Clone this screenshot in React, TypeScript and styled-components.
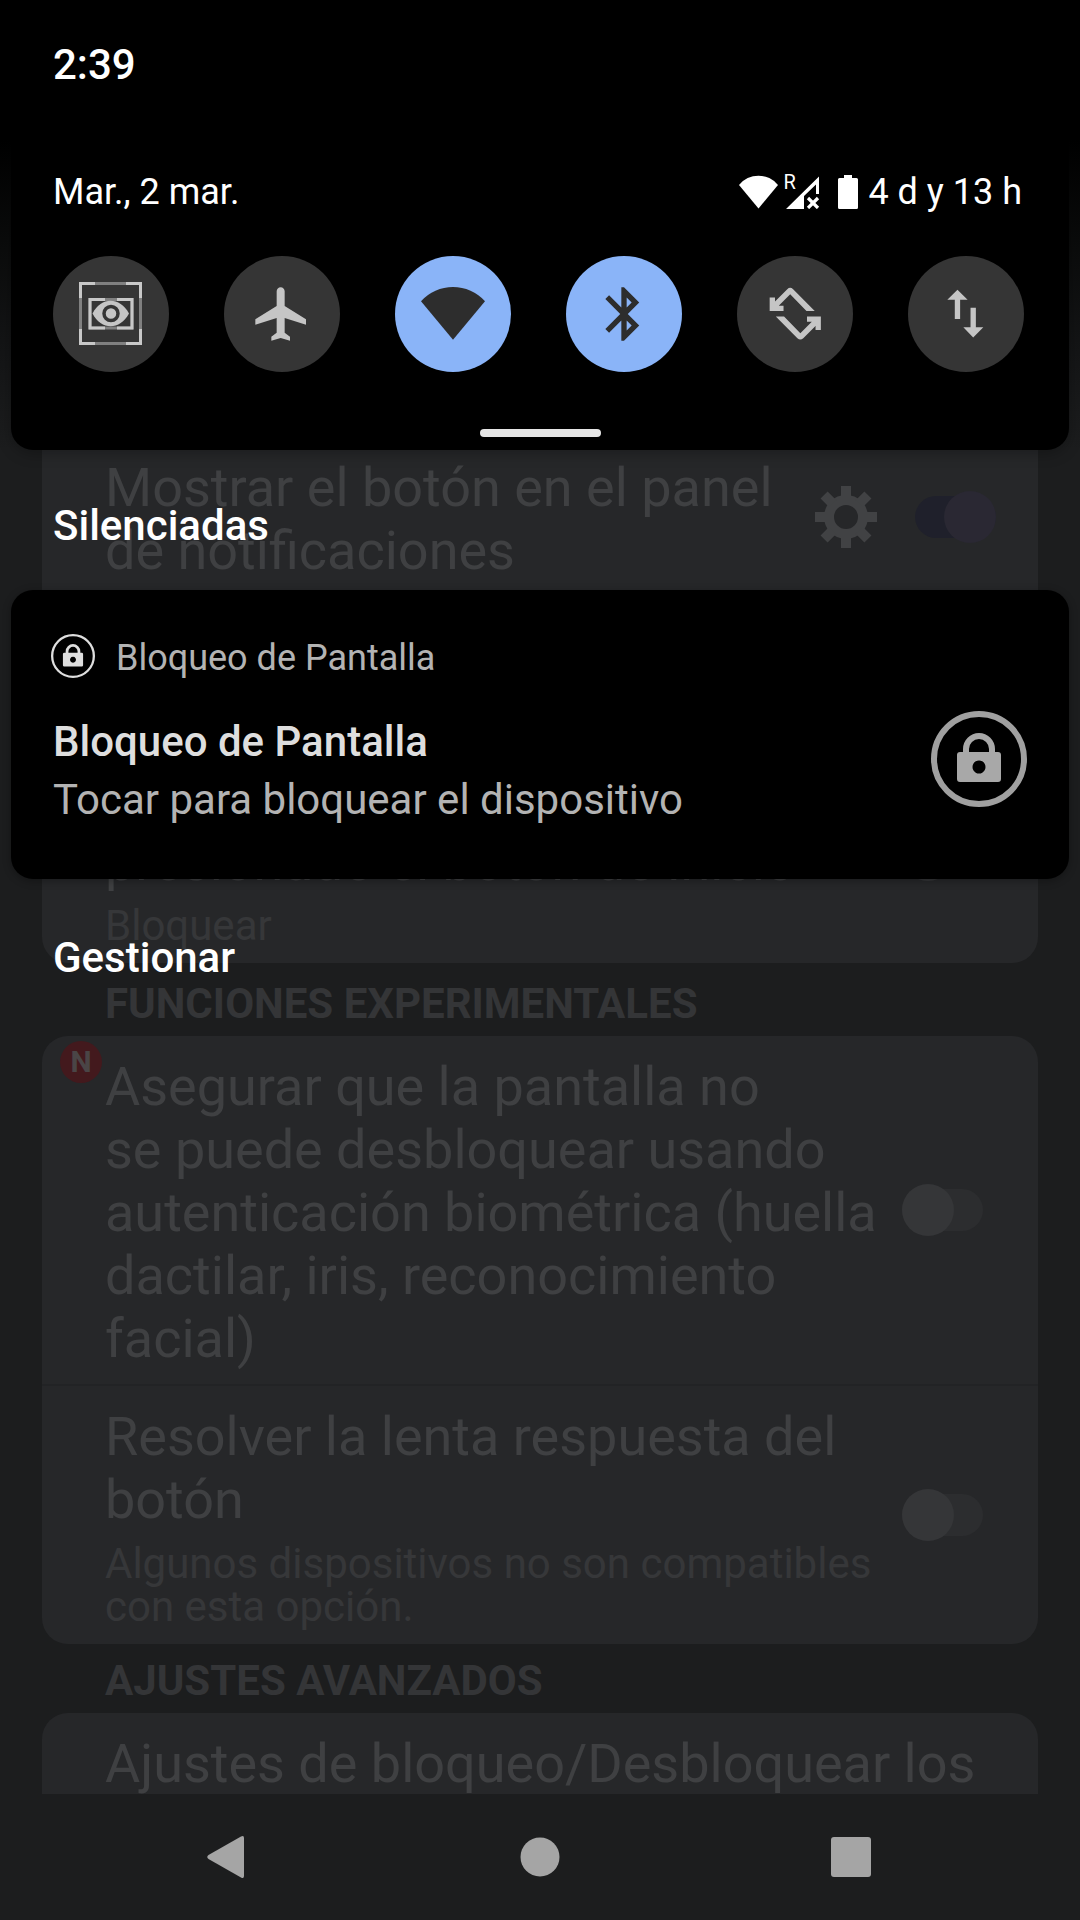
import React, { useId } from "react";
import styled, { createGlobalStyle } from "styled-components";

const GlobalStyle = createGlobalStyle`
  *, *::before, *::after { box-sizing: border-box; }
  body {
    margin: 0;
    background: #1c1d1e;
    font-family: Roboto, "Liberation Sans", sans-serif;
  }
  h1, h2, h3, p { margin: 0; font-weight: 400; }
  button {
    padding: 0;
    border: 0;
    background: none;
    color: inherit;
    font: inherit;
    cursor: pointer;
  }
  svg { display: block; }
`;

const Phone = styled.div`
  position: relative;
  display: flex;
  flex-direction: column;
  height: 100vh;
  overflow: hidden;
  background: #1c1d1e;
`;

/* ---------- settings screen, dimmed behind the shade ---------- */

const Settings = styled.main`
  flex: 1;
  min-height: 0;
  overflow: hidden;
  padding: 437px 42px 0;
`;

const cardRadius = { full: "26px", end: "0 0 26px 26px", start: "26px 26px 0 0" };

const Card = styled.section<{ $part?: keyof typeof cardRadius }>`
  position: relative;
  background: #262729;
  border-radius: ${(p) => cardRadius[p.$part ?? "full"]};
  margin-bottom: ${(p) => (p.$part === "end" ? "4px" : "0")};
`;

const Row = styled.div<{ $edge?: number; $minHeight?: number }>`
  display: flex;
  align-items: center;
  min-height: ${(p) => p.$minHeight ?? 0}px;
  padding: 0 ${(p) => p.$edge ?? 55}px 0 63px;

  & + & {
    border-top: 2px solid #222325;
  }
`;

const RowText = styled.div`
  flex: 1;
  align-self: flex-end;
  padding: 19px 0 14px;
`;

const RowTitle = styled.label`
  display: block;
  font-size: 54px;
  line-height: 63px;
  color: #3f4042;
`;

const RowNote = styled.p`
  margin: 11px 0 2px;
  font-size: 42px;
  line-height: 43px;
  color: #363739;
`;

const GroupTitle = styled.h2`
  padding: 12px 63px 8px;
  font-size: 42px;
  line-height: 49px;
  font-weight: 700;
  color: #343537;
`;

const NewBadge = styled.span`
  position: absolute;
  left: 18px;
  top: 5px;
  width: 42px;
  height: 42px;
  border-radius: 50%;
  background: #43191d;
  color: #4a4546;
  font-size: 30px;
  line-height: 42px;
  font-weight: 700;
  text-align: center;
`;

const GearButton = styled.button`
  margin-right: 38px;
  color: #414244;
`;

const Switch = styled.input`
  appearance: none;
  position: relative;
  flex: none;
  width: 81px;
  height: 42px;
  margin: 0;
  border-radius: 21px;
  background: #2c2d2f;

  &::before {
    content: "";
    position: absolute;
    top: -5px;
    left: 0;
    width: 52px;
    height: 52px;
    border-radius: 50%;
    background: #353638;
  }
  &:checked {
    background: #1f202b;
  }
  &:checked::before {
    left: 29px;
    background: #2a2833;
  }
`;

const NavBar = styled.nav`
  display: grid;
  grid-template-columns: repeat(3, 312px);
  justify-content: center;
  height: 126px;
  color: #a5a5a5;
`;

const NavButton = styled.button`
  display: grid;
  place-items: center;
`;

/* ---------- notification shade ---------- */

const Shade = styled.div`
  position: absolute;
  inset: 0 0 126px;
  padding: 0 11px;
  background: linear-gradient(#000 0, #000 130px, #0b0c0c 250px, #131415 340px, rgba(28, 29, 30, 0) 450px);
`;

const Heading = styled.h2`
  font-size: 42px;
  line-height: 49px;
  font-weight: 500;
  color: #fff;
`;

const StatusBar = styled.header`
  height: 128px;
  padding: 40px 42px 0;
`;

const QuickPanel = styled.section`
  padding: 42px 42px 13px;
  border-radius: 0 0 22px 22px;
  background: #000;
  box-shadow: 0 4px 14px rgba(0, 0, 0, 0.25);
`;

const InfoRow = styled.div`
  display: flex;
  justify-content: space-between;
  align-items: center;
  padding-right: 5px;
  font-size: 36px;
  line-height: 44px;
  color: #fff;
`;

const StatusIcons = styled.div`
  display: flex;
  align-items: center;
`;

const Signal = styled.span`
  position: relative;
  margin: 0 18px 0 8px;
`;

const Roaming = styled.span`
  position: absolute;
  left: -3px;
  top: -5px;
  font-size: 20px;
  line-height: 24px;
`;

const BatteryText = styled.span`
  margin-left: 10px;
`;

const Tiles = styled.div`
  display: flex;
  justify-content: space-between;
  margin: 42px 0 57px;
  padding-right: 3px;
`;

const Tile = styled.button<{ $on?: boolean }>`
  display: grid;
  place-items: center;
  width: 116px;
  height: 116px;
  border-radius: 50%;
  background: ${(p) => (p.$on ? "#8ab4f8" : "#353535")};
  color: ${(p) => (p.$on ? "#2d2d2d" : "#c5c5c5")};
`;

const Handle = styled.div`
  width: 121px;
  height: 8px;
  margin: 0 auto;
  border-radius: 4px;
  background: #e6e6e6;
`;

const ShadeLine = styled.div`
  padding: 51px 42px 40px;
`;

const ShadeFooter = styled.footer`
  padding: 54px 42px 40px;
`;

const Notification = styled.article`
  padding: 44px 42px 55px 40px;
  border-radius: 22px;
  background: #000;
  box-shadow: 0 2px 8px rgba(0, 0, 0, 0.3);
`;

const AppName = styled.div`
  display: flex;
  align-items: flex-end;
  gap: 21px;
  margin-bottom: 33px;
  font-size: 36px;
  line-height: 40px;
  color: #b3b3b3;
`;

const NoteBody = styled.div`
  display: flex;
  align-items: flex-start;
  justify-content: space-between;
`;

const NoteContent = styled.div`
  padding: 6px 0 0 2px;
`;

const NoteTitle = styled(Heading)`
  color: #dedede;
`;

const NoteText = styled.p`
  margin-top: 9px;
  font-size: 42px;
  line-height: 49px;
  color: #b3b3b3;
`;

/* ---------- drawings ---------- */

const Icon24 = ({ children }: { children: React.ReactNode }) => (
  <svg width="64" height="64" viewBox="0 0 24 24" fill="currentColor" aria-hidden="true">
    {children}
  </svg>
);

const EyeIcon = () => (
  <svg width="64" height="64" viewBox="0 0 64 64" fill="none" aria-hidden="true">
    <rect x="1.5" y="1.5" width="60" height="60" stroke="#808080" strokeWidth="3" />
    <path
      d="M1.5 16V1.5H16M47 1.5h14.5V16M61.5 47v14.5H47M16 61.5H1.5V47"
      stroke="#c8c8c8"
      strokeWidth="3"
    />
    <rect x="11" y="17.500" width="42" height="28.500" stroke="#808080" strokeWidth="3" />
    <path d="M26 17.500H11V46H26M38 17.500H53V46H38" stroke="#c8c8c8" strokeWidth="3" />
    <path d="M13.500 31.500C22 14.500 41 14.500 50 31.500C41 48.500 22 48.500 13.500 31.500z" fill="#c5c5c5" />
    <circle cx="32" cy="31.500" r="7" fill="#c5c5c5" stroke="#353535" strokeWidth="3.500" />
  </svg>
);

const AirplaneIcon = () => (
  <Icon24>
    <path d="M21 16v-2l-8-5V3.500c0-.83-.67-1.500-1.500-1.500S10 2.670 10 3.500V9l-8 5v2l8-2.500V19l-2 1.500V22l3.500-1 3.500 1v-1.500L13 19v-5.500l8 2.500z" />
  </Icon24>
);

const WifiTileIcon = () => (
  <Icon24>
    <path d="M0 7.200A16.200 16.200 0 0 1 24 7.200L12 21.700z" />
  </Icon24>
);

const BluetoothIcon = () => (
  <Icon24>
    <path d="M17.710 7.710L12 2h-1v7.590L6.410 5 5 6.410 10.590 12 5 17.590 6.410 19 11 14.410V22h1l5.710-5.710-4.300-4.290 4.300-4.290zM13 5.830l1.880 1.880L13 9.590V5.830zm1.880 10.460L13 18.170v-3.760l1.880 1.880z" />
  </Icon24>
);

const turnArrow =
  "M19.4 10.9L11.3 2.7Q10.2 1.700 9.100 2.700L4.500 7.300V5.800H2.500V10.900H7.700V8.900H5.900L10.200 4.600L16.300 10.900z";

const RotateIcon = () => (
  <Icon24>
    <path d={turnArrow} />
    <path d={turnArrow} transform="rotate(180 12.1 11.9)" />
  </Icon24>
);

const DataIcon = () => (
  <Icon24>
    <path d="M8.800 2.900L5 6.700h2.800v7.200h2V6.700h2.800zM14.700 20.800l3.800-3.800h-2.800V9.700h-2V17H11z" />
  </Icon24>
);

const WifiIcon = () => (
  <svg width="39" height="34" viewBox="0 0 39 34" fill="currentColor" aria-hidden="true">
    <path d="M0 10A25 25 0 0 1 39 10L19.500 33.500z" />
  </svg>
);

const SignalIcon = () => (
  <svg width="34" height="34" viewBox="0 0 34 34" fill="currentColor" aria-hidden="true">
    <path d="M0 34L33 1.500V19H30V9.500L18 21V34z" />
    <path d="M22 23l10 10M32 23L22 33" stroke="currentColor" strokeWidth="3.200" />
  </svg>
);

const BatteryIcon = () => (
  <svg width="20" height="34" viewBox="0 0 20 34" fill="currentColor" aria-hidden="true">
    <path d="M6 0h8v3h4.500Q20 3 20 4.500v28Q20 34 18.500 34h-17Q0 34 0 32.500v-28Q0 3 1.500 3H6z" />
  </svg>
);

const LockIcon = ({ size, ring, width, color }: { size: number; ring: string; width: number; color: string }) => (
  <svg width={size} height={size} viewBox="0 0 96 96" fill="none" aria-hidden="true">
    <circle cx="48" cy="48" r={48 - width / 2} stroke={ring} strokeWidth={width} />
    <path d="M35 42V38a13 13 0 0 1 26 0v4" stroke={color} strokeWidth="6" />
    <path
      fillRule="evenodd"
      fill={color}
      d="M29 41h38q3 0 3 3v24q0 3-3 3H29q-3 0-3-3V44q0-3 3-3zM48 49.500a6.500 6.500 0 1 0 .01 0z"
    />
  </svg>
);

const GearIcon = () => (
  <svg width="62" height="62" viewBox="-31 -31 62 62" fill="none" aria-hidden="true">
    <circle r="17" stroke="currentColor" strokeWidth="10" />
    {[0, 45, 90, 135, 180, 225, 270, 315].map((angle) => (
      <rect key={angle} x="-5" y="-31" width="10" height="12" fill="currentColor" transform={`rotate(${angle})`} />
    ))}
  </svg>
);

/* ---------- parts ---------- */

type SettingProps = {
  title: React.ReactNode;
  note?: string;
  on?: boolean;
  gear?: boolean;
  plain?: boolean;
  edge?: number;
  minHeight?: number;
};

function Setting({ title, note, on, gear, plain, edge, minHeight }: SettingProps) {
  const id = useId();
  return (
    <Row $edge={edge} $minHeight={minHeight}>
      <RowText>
        <RowTitle as={plain ? "p" : "label"} htmlFor={plain ? undefined : id}>
          {title}
        </RowTitle>
        {note && <RowNote>{note}</RowNote>}
      </RowText>
      {gear && (
        <GearButton type="button" aria-label="Ajustes">
          <GearIcon />
        </GearButton>
      )}
      {!plain && <Switch id={id} type="checkbox" role="switch" defaultChecked={on} />}
    </Row>
  );
}

const tiles = [
  { name: "Lectura", icon: <EyeIcon />, on: false },
  { name: "Modo avión", icon: <AirplaneIcon />, on: false },
  { name: "Wi-Fi", icon: <WifiTileIcon />, on: true },
  { name: "Bluetooth", icon: <BluetoothIcon />, on: true },
  { name: "Girar automáticamente", icon: <RotateIcon />, on: false },
  { name: "Datos móviles", icon: <DataIcon />, on: false },
];

export default function App() {
  return (
    <>
      <GlobalStyle />
      <Phone>
        <Settings>
          <Card $part="end">
            <Setting title="Mostrar el botón en el panel de notificaciones" on gear edge={42} />
            <Row $minHeight={149} />
            <Setting title="presionado el botón de inicio" note="Bloquear" minHeight={218} />
          </Card>
          <GroupTitle>FUNCIONES EXPERIMENTALES</GroupTitle>
          <Card>
            <NewBadge>N</NewBadge>
            <Setting
              title={
                <>
                  Asegurar que la pantalla no
                  <br />
                  se puede desbloquear usando autenticación biométrica (huella dactilar, iris, reconocimiento facial)
                </>
              }
            />
            <Setting
              title="Resolver la lenta respuesta del botón"
              note="Algunos dispositivos no son compatibles con esta opción."
            />
          </Card>
          <GroupTitle>AJUSTES AVANZADOS</GroupTitle>
          <Card $part="start">
            <Setting title="Ajustes de bloqueo/Desbloquear los" plain />
          </Card>
        </Settings>

        <NavBar>
          <NavButton type="button" aria-label="Atrás">
            <svg width="42" height="42" viewBox="0 0 42 42" fill="currentColor">
              <path d="M34 .5Q37-1 37 2V40Q37 43 34 41.500L1.500 23Q-1 21 1.500 19z" />
            </svg>
          </NavButton>
          <NavButton type="button" aria-label="Inicio">
            <svg width="40" height="40" viewBox="0 0 40 40" fill="currentColor">
              <circle cx="20" cy="20" r="19.500" />
            </svg>
          </NavButton>
          <NavButton type="button" aria-label="Recientes">
            <svg width="42" height="40" viewBox="0 0 42 40" fill="currentColor">
              <rect width="40" height="40" rx="3" />
            </svg>
          </NavButton>
        </NavBar>

        <Shade>
          <StatusBar>
            <Heading as="time">2:39</Heading>
          </StatusBar>
          <QuickPanel>
            <InfoRow>
              <span>Mar., 2 mar.</span>
              <StatusIcons>
                <WifiIcon />
                <Signal>
                  <Roaming>R</Roaming>
                  <SignalIcon />
                </Signal>
                <BatteryIcon />
                <BatteryText>4 d y 13 h</BatteryText>
              </StatusIcons>
            </InfoRow>
            <Tiles>
              {tiles.map((tile) => (
                <Tile key={tile.name} type="button" $on={tile.on} aria-label={tile.name} aria-pressed={tile.on}>
                  {tile.icon}
                </Tile>
              ))}
            </Tiles>
            <Handle />
          </QuickPanel>
          <ShadeLine>
            <Heading>Silenciadas</Heading>
          </ShadeLine>
          <Notification>
            <AppName>
              <LockIcon size={44} ring="#dedede" width={5} color="#dedede" />
              Bloqueo de Pantalla
            </AppName>
            <NoteBody>
              <NoteContent>
                <NoteTitle as="h3">Bloqueo de Pantalla</NoteTitle>
                <NoteText>Tocar para bloquear el dispositivo</NoteText>
              </NoteContent>
              <LockIcon size={96} ring="#a0a0a0" width={6} color="#a8a8a8" />
            </NoteBody>
          </Notification>
          <ShadeFooter>
            <Heading as="button" type="button">
              Gestionar
            </Heading>
          </ShadeFooter>
        </Shade>
      </Phone>
    </>
  );
}
